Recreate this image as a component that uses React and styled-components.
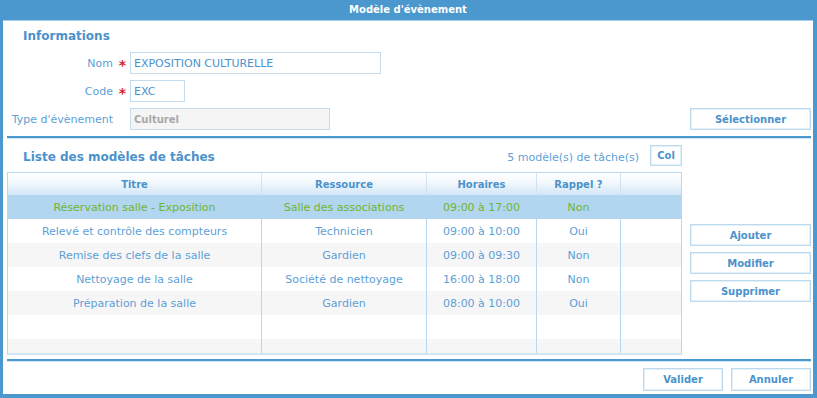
import React from "react";
import styled, { createGlobalStyle } from "styled-components";

const Global = createGlobalStyle`
  html, body { margin: 0; padding: 0; background: #ffffff; }
  body { font-family: "DejaVu Sans", Verdana, sans-serif; font-size: 11px; }
  * { box-sizing: border-box; }
`;

const BLUE = "#4a98cd";
const TEXT = "#5d9fd6";
const HEAD = "#4b92cc";
const LINE = "#b9d7ee";

const Dialog = styled.div`
  width: 817px;
  height: 398px;
  background: ${BLUE};
  padding: 0 4px 4px 3px;
  display: flex;
  flex-direction: column;
`;

const TitleBar = styled.div`
  height: 20px;
  flex: none;
  display: flex;
  align-items: center;
  justify-content: center;
  color: #ffffff;
  font-weight: bold;
  font-size: 10px;
  padding-bottom: 1px;
`;

const Content = styled.div`
  flex: 1;
  background: #ffffff;
  border-top: 1px solid #a9d0ec;
  display: flex;
  flex-direction: column;
  padding: 0 2px 0 4px;
`;

const SectionTitle = styled.div`
  font-weight: bold;
  font-size: 12px;
  line-height: 17px;
  height: 17px;
  color: ${HEAD};
  padding-left: 16px;
  margin-top: ${(p) => p.$top || 0}px;
`;

const Form = styled.div`
  display: flex;
  flex-direction: column;
  gap: 6px;
  margin-top: 7px;
`;

const FormRow = styled.div`
  display: flex;
  align-items: center;
  height: 22px;
`;

const Label = styled.div`
  width: 106px;
  text-align: right;
  color: ${TEXT};
  font-size: 11px;
  white-space: nowrap;
`;

const Star = styled.div`
  width: 17px;
  text-align: center;
  color: #d4262a;
  font-weight: bold;
  font-size: 14px;
  line-height: 10px;
  padding-top: 4px;
  padding-left: 2px;
`;

const Input = styled.div`
  width: ${(p) => p.$w}px;
  height: 22px;
  border: 1px solid #c3dcef;
  background: ${(p) => (p.$disabled ? "#f5f5f5" : "#ffffff")};
  color: ${(p) => (p.$disabled ? "#a8a8a8" : HEAD)};
  font-weight: ${(p) => (p.$disabled ? "bold" : "normal")};
  font-size: ${(p) => (p.$disabled ? 10 : 11)}px;
  display: flex;
  align-items: center;
  padding-left: 3px;
  white-space: nowrap;
`;

const Button = styled.button`
  font-family: "DejaVu Sans", Verdana, sans-serif;
  font-weight: bold;
  font-size: 10px;
  color: ${HEAD};
  background: #ffffff;
  border: 1px solid #bcd9ee;
  box-shadow: inset 0 0 0 1px #e3f0f9;
  width: ${(p) => p.$w || 121}px;
  height: ${(p) => p.$h || 22}px;
  padding: 0;
  margin: 0;
  cursor: pointer;
  flex: none;
`;

const RightButton = styled(Button)`
  margin-left: auto;
`;

const Separator = styled.div`
  height: 3px;
  flex: none;
  border-top: 2px solid ${BLUE};
  border-bottom: 1px solid #cfe4f4;
  margin-top: ${(p) => p.$top}px;
`;

const ListArea = styled.div`
  display: flex;
  align-items: flex-start;
`;

const ListColumn = styled.div`
  width: 677px;
  padding-top: 6px;
  display: flex;
  flex-direction: column;
`;

const ListHeader = styled.div`
  height: 21px;
  display: flex;
  align-items: center;
`;

const ListTitle = styled(SectionTitle)`
  flex: 1;
  padding-top: 2px;
`;

const Count = styled.div`
  color: ${TEXT};
  font-size: 11px;
  margin-right: 11px;
  padding-top: 3px;
`;

const Table = styled.div`
  margin-top: 6px;
  border: 1px solid ${LINE};
  border-bottom: 2px solid #d3e6f5;
`;

const Grid = styled.div`
  display: grid;
  grid-template-columns: 254px 165px 110px 84px 1fr;
`;

const HeadCell = styled.div`
  height: 22px;
  display: flex;
  align-items: center;
  justify-content: center;
  font-weight: bold;
  font-size: 10px;
  color: ${HEAD};
  background: linear-gradient(#ffffff 0%, #f4f9fd 40%, #d2e6f6 100%);
  border-right: ${(p) => (p.$last ? "none" : "1px solid #cfe3f3")};
`;

const Body = styled.div`
  height: 158px;
  overflow: hidden;
`;

const Cell = styled.div`
  height: 24px;
  display: flex;
  align-items: center;
  justify-content: center;
  font-size: 11px;
  color: ${(p) => (p.$selected ? "#6fb52e" : TEXT)};
  background: ${(p) => (p.$selected ? "#b2d6f0" : p.$odd ? "#f6f6f6" : "#ffffff")};
  border-right: ${(p) => (p.$last ? "none" : p.$selected ? "1px solid #b2d6f0" : `1px solid ${LINE}`)};
  white-space: nowrap;
`;

const SideButtons = styled.div`
  margin-left: 8px;
  padding-top: 85px;
  display: flex;
  flex-direction: column;
  gap: 6px;
`;

const Footer = styled.div`
  margin-top: 6px;
  display: flex;
  justify-content: flex-end;
  gap: 8px;
`;

const columns = ["Titre", "Ressource", "Horaires", "Rappel ?", ""];

const rows = [
  ["Réservation salle - Exposition", "Salle des associations", "09:00 à 17:00", "Non", ""],
  ["Relevé et contrôle des compteurs", "Technicien", "09:00 à 10:00", "Oui", ""],
  ["Remise des clefs de la salle", "Gardien", "09:00 à 09:30", "Non", ""],
  ["Nettoyage de la salle", "Société de nettoyage", "16:00 à 18:00", "Non", ""],
  ["Préparation de la salle", "Gardien", "08:00 à 10:00", "Oui", ""],
  ["", "", "", "", ""],
  ["", "", "", "", ""],
];

export default function App() {
  return (
    <>
      <Global />
      <Dialog>
        <TitleBar>Modèle d'évènement</TitleBar>
        <Content>
          <SectionTitle $top={7}>Informations</SectionTitle>
          <Form>
            <FormRow>
              <Label>Nom</Label>
              <Star>*</Star>
              <Input $w={251}>EXPOSITION CULTURELLE</Input>
            </FormRow>
            <FormRow>
              <Label>Code</Label>
              <Star>*</Star>
              <Input $w={55}>EXC</Input>
            </FormRow>
            <FormRow>
              <Label>Type d'évènement</Label>
              <Star />
              <Input $w={200} $disabled>Culturel</Input>
              <RightButton $w={121} $h={22}>Sélectionner</RightButton>
            </FormRow>
          </Form>
          <Separator $top={6} />
          <ListArea>
            <ListColumn>
              <ListHeader>
                <ListTitle>Liste des modèles de tâches</ListTitle>
                <Count>5 modèle(s) de tâche(s)</Count>
                <Button $w={32} $h={21}>Col</Button>
              </ListHeader>
              <Table>
                <Grid>
                  {columns.map((c, i) => (
                    <HeadCell key={i} $last={i === columns.length - 1}>{c}</HeadCell>
                  ))}
                </Grid>
                <Body>
                  <Grid>
                    {rows.map((r, ri) =>
                      r.map((v, ci) => (
                        <Cell
                          key={`${ri}-${ci}`}
                          $selected={ri === 0}
                          $odd={ri % 2 === 0}
                          $last={ci === r.length - 1}
                        >
                          {v}
                        </Cell>
                      ))
                    )}
                  </Grid>
                </Body>
              </Table>
            </ListColumn>
            <SideButtons>
              <Button>Ajouter</Button>
              <Button>Modifier</Button>
              <Button>Supprimer</Button>
            </SideButtons>
          </ListArea>
          <Separator $top={4} />
          <Footer>
            <Button $w={80} $h={23}>Valider</Button>
            <Button $w={80} $h={23}>Annuler</Button>
          </Footer>
        </Content>
      </Dialog>
    </>
  );
}
